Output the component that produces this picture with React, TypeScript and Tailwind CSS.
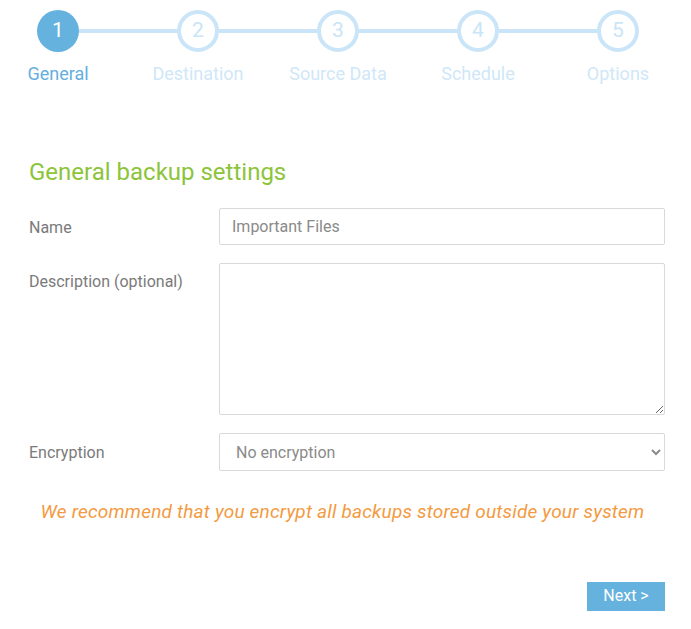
const steps = ["General", "Destination", "Source Data", "Schedule", "Options"];

function Stepper() {
  return (
    <div className="ml-[-12px] mt-[10px] flex">
      {steps.map((label, i) => {
        const active = i === 0;
        return (
          <div key={label} className="flex w-[140px] flex-col items-center">
            <div className="flex w-full items-center">
              <div className={`h-[4px] flex-1 ${i === 0 ? "" : "bg-[#c9e5f7]"}`} />
              <div
                className={`flex h-[42px] w-[42px] items-center justify-center rounded-full text-[21px] ${
                  active
                    ? "bg-[#65b2de] text-white"
                    : "border-[4px] border-[#c9e5f7] bg-white text-[#c9e5f7]"
                }`}
              >
                {i + 1}
              </div>
              <div className={`h-[4px] flex-1 ${i === steps.length - 1 ? "" : "bg-[#c9e5f7]"}`} />
            </div>
            <div
              className={`mt-[11px] text-[18px] leading-[22px] ${
                active ? "text-[#65aee0]" : "text-[#cfe7f8]"
              }`}
            >
              {label}
            </div>
          </div>
        );
      })}
    </div>
  );
}

export default function App() {
  return (
    <div className="h-[629px] w-[691px] bg-white font-['Roboto',sans-serif]">
      <Stepper />

      <div className="pl-[29px] pr-[26px]">
        <h2 className="mt-[72px] text-[24px] leading-[30px] text-[#8cc43a]">General backup settings</h2>

        <div className="mt-[21px] flex flex-col gap-[18px]">
          <div className="flex items-start">
            <label className="w-[190px] pt-[8px] text-[16px] text-[#7a7a7a]">Name</label>
            <input
              className="h-[37px] flex-1 rounded-[2px] border border-[#d9d9d9] px-[12px] text-[16px] text-[#8a8a8a] outline-none"
              defaultValue="Important Files"
            />
          </div>

          <div className="flex items-start">
            <label className="w-[190px] pt-[7px] text-[16px] text-[#7a7a7a]">Description (optional)</label>
            <textarea className="h-[152px] flex-1 rounded-[2px] border border-[#d9d9d9] px-[12px] text-[16px] outline-none" />
          </div>

          <div className="flex items-start">
            <label className="w-[190px] pt-[8px] text-[16px] text-[#7a7a7a]">Encryption</label>
            <select className="h-[38px] flex-1 rounded-[2px] border border-[#d9d9d9] bg-white px-[12px] text-[16px] text-[#8a8a8a] outline-none">
              <option>No encryption</option>
            </select>
          </div>
        </div>

        <p className="mr-[9px] mt-[27px] text-center text-[19px] italic tracking-[0.2px] text-[#f39a42]">
          We recommend that you encrypt all backups stored outside your system
        </p>

        <div className="mt-[55px] flex justify-end">
          <button className="h-[29px] w-[78px] bg-[#65b2de] text-[16px] text-white">Next &gt;</button>
        </div>
      </div>
    </div>
  );
}
